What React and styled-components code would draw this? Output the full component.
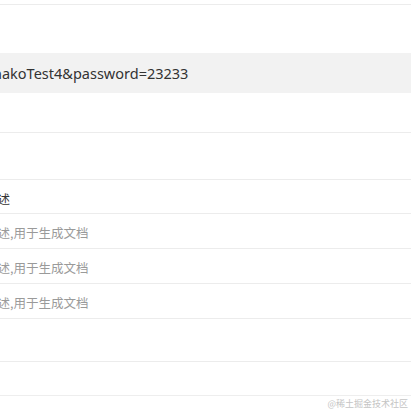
import styled, { createGlobalStyle } from "styled-components";

const Global = createGlobalStyle`
  html, body { margin: 0; padding: 0; background: #fff; }
  body {
    font-family: "Noto Sans", "Noto Sans CJK SC", sans-serif;
    overflow: hidden;
  }
`;

const Page = styled.div`
  width: 411px;
  height: 411px;
  overflow: hidden;
  display: flex;
  flex-direction: column;
  & > * { flex-shrink: 0; }
`;

const Block = styled.div`
  height: ${(p) => p.$h}px;
  border-top: ${(p) => (p.$line ? "1px solid #ececec" : "none")};
  box-sizing: border-box;
`;

const Code = styled.div`
  height: 40px;
  background: #f2f2f2;
  display: flex;
  align-items: center;
  font-size: 14.5px;
  color: #333;
  white-space: nowrap;
`;

const Row = styled.div`
  height: ${(p) => p.$h || 35}px;
  border-top: 1px solid #ececec;
  box-sizing: border-box;
  padding-top: 3px;
  display: flex;
  align-items: center;
  white-space: nowrap;
  font-family: "Noto Sans CJK SC", sans-serif;
  font-size: 12.5px;
  color: ${(p) => (p.$muted ? "#9a9a9a" : "#333")};
`;

const Shift = styled.span`
  margin-left: ${(p) => p.$x}px;
`;

const Mark = styled.div`
  flex: 1;
  min-height: 0;
  border-top: 1px solid #eeeeee;
  display: flex;
  justify-content: flex-end;
  padding: 1px 3px 0 0;
  font-family: "Noto Sans CJK SC", sans-serif;
  font-size: 9px;
  color: #c4c4c4;
`;

export default function App() {
  const params = ["参数描述,用于生成文档", "参数描述,用于生成文档", "参数描述,用于生成文档"];
  return (
    <Page>
      <Global />
      <Block $h={4} />
      <Block $h={49} $line />
      <Code>
        <Shift $x={-7}>nakoTest4&amp;password=23233</Shift>
      </Code>
      <Block $h={39} />
      <Row $h={47} />
      <Row $h={34}>
        <Shift $x={-40}>接口描述</Shift>
      </Row>
      {params.map((t, i) => (
        <Row key={i} $muted>
          <Shift $x={-40}>{t}</Shift>
        </Row>
      ))}
      <Row $h={43} />
      <Row $h={34} />
      <Mark>@稀土掘金技术社区</Mark>
    </Page>
  );
}
